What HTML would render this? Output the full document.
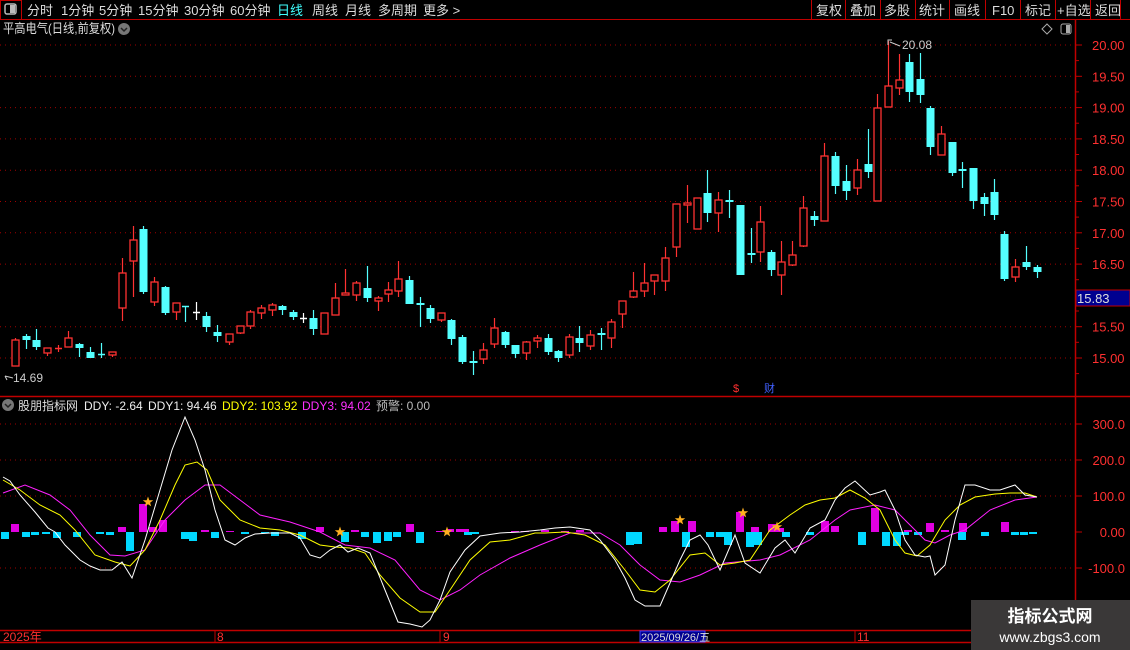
<!DOCTYPE html>
<html><head><meta charset="utf-8">
<style>
html,body{margin:0;padding:0;background:#000;width:1130px;height:650px;overflow:hidden;font-family:"Liberation Sans","Noto Sans CJK SC",sans-serif;}
svg{position:absolute;left:0;top:0}
text{font-family:"Liberation Sans","Noto Sans CJK SC",sans-serif}
</style></head><body>
<svg id="s" width="1130" height="650" xmlns="http://www.w3.org/2000/svg">
<rect width="1130" height="650" fill="#000"/>
<line x1="0" y1="19.5" x2="1130" y2="19.5" stroke="#c00000"/>
<rect x="0.5" y="0.5" width="21" height="19" fill="none" stroke="#c00000"/>
<rect x="5" y="4" width="11" height="10" rx="2" fill="none" stroke="#bbb" stroke-width="1.5"/>
<rect x="10" y="5" width="5" height="8" fill="#bbb"/>
<g font-size="13" fill="#ddd">
<text x="27" y="15">分时</text><text x="61" y="15">1分钟</text><text x="99" y="15">5分钟</text>
<text x="138" y="15">15分钟</text><text x="184" y="15">30分钟</text><text x="230" y="15">60分钟</text>
<text x="277" y="15" fill="#40ffff">日线</text><text x="312" y="15">周线</text><text x="345" y="15">月线</text>
<text x="378" y="15">多周期</text><text x="423" y="15">更多 &gt;</text>
<text x="816" y="15">复权</text><text x="850" y="15">叠加</text><text x="884" y="15">多股</text>
<text x="919" y="15">统计</text><text x="954" y="15">画线</text><text x="992" y="15">F10</text>
<text x="1025" y="15">标记</text><text x="1057" y="15">+自选</text><text x="1095" y="15">返回</text>
</g>
<g stroke="#c00000">
<line x1="811.5" y1="0" x2="811.5" y2="19"/><line x1="845.5" y1="0" x2="845.5" y2="19"/>
<line x1="880.5" y1="0" x2="880.5" y2="19"/><line x1="915.5" y1="0" x2="915.5" y2="19"/>
<line x1="949.5" y1="0" x2="949.5" y2="19"/><line x1="985.5" y1="0" x2="985.5" y2="19"/>
<line x1="1020.5" y1="0" x2="1020.5" y2="19"/><line x1="1055.5" y1="0" x2="1055.5" y2="19"/>
<line x1="1090.5" y1="0" x2="1090.5" y2="19"/><line x1="1120.5" y1="0" x2="1120.5" y2="19"/>
</g>
<text x="3" y="33" font-size="13" fill="#ddd" textLength="112" lengthAdjust="spacingAndGlyphs">平高电气(日线,前复权)</text>
<circle cx="124" cy="29" r="6" fill="#777"/><path d="M121 28 L124 31 L127 28" stroke="#222" stroke-width="1.5" fill="none"/>
<path d="M1042 29 L1047 24 L1052 29 L1047 34 Z" fill="none" stroke="#aaa"/>
<rect x="1061" y="24" width="10" height="10" rx="2" fill="none" stroke="#aaa"/><rect x="1066" y="25" width="4" height="8" fill="#aaa"/>
<line x1="1075.5" y1="20" x2="1075.5" y2="630" stroke="#c00000" stroke-width="1.5"/>
<line x1="0" y1="396.5" x2="1130" y2="396.5" stroke="#c00000" stroke-width="1.5"/>
<g id="grid"></g>
<g id="cand"></g>
<g id="ind"></g>
<text x="902" y="49" font-size="12" fill="#ccc">20.08</text>
<path d="M888 45 L888 40 L892 40 M890 42 L900 46" stroke="#ccc" fill="none"/>
<text x="13" y="382" font-size="12" fill="#ccc">14.69</text>
<path d="M5 376 L13 378 M5 376 L7 380" stroke="#ccc" fill="none"/>
<rect x="1076" y="290" width="54" height="16" fill="#000090" stroke="#c00000"/>
<text x="1077" y="303" font-size="13" fill="#ddd">15.83</text>
<text x="733" y="392" font-size="11" fill="#ff3030">$</text>
<text x="764" y="392" font-size="11" fill="#4060ff">财</text>
<circle cx="8" cy="405" r="6" fill="#777"/><path d="M5 404 L8 407 L11 404" stroke="#222" stroke-width="1.5" fill="none"/>
<g font-size="12">
<text x="18" y="410" fill="#ddd">股朋指标网</text>
<text x="84" y="410" fill="#eee">DDY: -2.64</text>
<text x="148" y="410" fill="#eee">DDY1: 94.46</text>
<text x="222" y="410" fill="#ffff00">DDY2: 103.92</text>
<text x="302" y="410" fill="#ff30ff">DDY3: 94.02</text>
<text x="376" y="410" fill="#bbb">预警: 0.00</text>
</g>
<line x1="0" y1="630.5" x2="1130" y2="630.5" stroke="#c00000" stroke-width="1.5"/>
<line x1="0" y1="642.5" x2="1130" y2="642.5" stroke="#c00000" stroke-width="1.5"/>
<g stroke="#c00000"><line x1="215" y1="630" x2="215" y2="642"/><line x1="440" y1="630" x2="440" y2="642"/><line x1="855" y1="630" x2="855" y2="642"/></g>
<g font-size="12" fill="#ff3030">
<text x="3" y="641">2025年</text><text x="217" y="641">8</text><text x="443" y="641">9</text><text x="857" y="641">11</text>
</g>
<rect x="640" y="631" width="65" height="11" fill="#000090" stroke="#4040ff"/>
<text x="641" y="641" font-size="11" fill="#ddd">2025/09/26/五</text>
<rect x="971" y="600" width="159" height="50" fill="#3a3838"/>
<text x="1050" y="622" font-size="17" font-weight="bold" fill="#fff" text-anchor="middle">指标公式网</text>
<text x="1050" y="642" font-size="14" fill="#fff" text-anchor="middle">www.zbgs3.com</text>
</svg>
<script>
var NS="http://www.w3.org/2000/svg";
function add(g,tag,a){var e=document.createElementNS(NS,tag);for(var k in a)e.setAttribute(k,a[k]);document.getElementById(g).appendChild(e);return e;}
var labs=["20.00","19.50","19.00","18.50","18.00","17.50","17.00","16.50","16.00","15.50","15.00"];
for(var i=0;i<11;i++){var y=45+i*31.3;
 if(i!=8){add("grid","line",{x1:0,y1:y,x2:1075,y2:y,stroke:"#a00000","stroke-dasharray":"1,4"});
 add("grid","text",{x:1092,y:y+5,"font-size":13,fill:"#ff3030"}).textContent=labs[i];}
 add("grid","line",{x1:1075,y1:y,x2:1082,y2:y,stroke:"#c00000"});
 add("grid","line",{x1:1075,y1:y+15.6,x2:1079,y2:y+15.6,stroke:"#c00000"});
}
[424,460,496,568].forEach(function(y){add("grid","line",{x1:0,y1:y,x2:1075,y2:y,stroke:"#a00000","stroke-dasharray":"1,4"});});
[[424,"300.0"],[460,"200.0"],[496,"100.0"],[532,"0.00"],[568,"-100.0"]].forEach(function(a){
 add("grid","line",{x1:1075,y1:a[0],x2:1082,y2:a[0],stroke:"#c00000"});
 add("grid","text",{x:1125,y:a[0]+5,"font-size":13,fill:"#ff3030","text-anchor":"end"}).textContent=a[1];});
var C=[[15,338,340,366,366,'r'],[26,334,336,340,349,'c'],[36,329,340,347,350,'c'],[47,348,348,353,356,'r'],[58,345,348,349,352,'r'],[68,331,338,347,347,'r'],[79,343,344,348,357,'c'],[90,347,352,358,358,'c'],[101,343,354,355,358,'c'],[112,352,352,355,357,'r'],
[122,258,273,308,321,'r'],[133,226,240,261,297,'r'],[143,226,229,292,294,'c'],[154,277,282,302,306,'r'],[165,286,287,313,315,'c'],[176,303,303,312,320,'r'],[185,306,306,307,322,'c'],[196,302,312,313,320,'w'],[206,312,316,327,332,'c'],[217,325,332,336,342,'c'],
[229,334,334,342,345,'r'],[240,326,326,333,334,'r'],[250,310,312,326,329,'r'],[261,305,308,313,319,'r'],[272,303,305,310,316,'r'],[282,305,306,310,315,'c'],[293,310,312,317,320,'c'],[303,313,318,319,323,'w'],[313,310,318,329,335,'c'],[324,313,313,334,334,'r'],
[335,283,298,315,315,'r'],[345,269,293,295,295,'r'],[356,281,283,295,301,'r'],[367,266,288,298,302,'c'],[378,296,298,301,311,'r'],[388,282,290,294,302,'r'],[398,261,279,291,297,'r'],[409,276,280,304,304,'c'],[420,297,303,305,327,'c'],[430,305,308,319,323,'c'],
[441,313,313,320,322,'r'],[451,319,320,339,345,'c'],[462,335,337,362,364,'c'],[473,351,361,363,375,'c'],[483,343,350,359,364,'r'],[494,318,328,344,348,'r'],[505,331,332,345,348,'c'],[515,345,345,354,358,'c'],[526,341,342,353,360,'r'],[537,335,338,341,348,'r'],
[548,334,338,352,355,'c'],[558,350,351,358,362,'c'],[569,334,337,355,358,'r'],[579,326,338,343,352,'c'],[590,330,335,346,350,'r'],[601,328,333,335,350,'c'],[611,319,322,338,348,'r'],[622,301,301,314,328,'r'],[633,272,291,297,298,'r'],[644,263,283,291,297,'r'],
[654,275,275,281,295,'r'],[665,247,258,281,291,'r'],[676,204,204,247,257,'r'],[687,185,203,205,223,'r'],[697,198,198,229,229,'r'],[707,170,193,213,222,'c'],[718,192,200,213,232,'r'],[729,190,200,202,218,'c'],[740,205,205,275,275,'c'],[751,228,253,255,263,'c'],
[760,206,222,252,262,'r'],[771,250,252,270,276,'c'],[781,241,262,275,295,'r'],[792,241,255,265,266,'r'],[803,196,208,246,247,'r'],[814,211,216,220,226,'c'],[824,143,156,221,221,'r'],[835,152,156,186,194,'c'],[846,165,181,191,200,'c'],[857,159,170,188,195,'r'],
[868,129,164,172,178,'c'],[877,94,108,201,201,'r'],[888,41,86,107,107,'r'],[899,54,80,88,95,'r'],[909,54,62,92,102,'c'],[920,53,79,95,103,'c'],[930,106,108,147,155,'c'],[941,126,134,155,155,'r'],[952,142,142,173,176,'c'],[962,162,169,171,188,'c'],
[973,168,168,201,209,'c'],[984,193,197,204,216,'c'],[994,179,192,215,220,'c'],[1004,231,234,279,281,'c'],[1015,259,267,277,282,'r'],[1026,246,262,267,270,'c'],[1037,265,267,272,278,'c']];
C.forEach(function(d){var col=d[5]=='r'?'#ff3232':d[5]=='c'?'#54ffff':'#ffffff';
 add("cand","line",{x1:d[0]+.5,y1:d[1],x2:d[0]+.5,y2:d[4],stroke:col,"stroke-width":1.2});
 var h=d[3]-d[2];
 if(h<2){add("cand","line",{x1:d[0]-3,y1:d[2]+.5,x2:d[0]+4,y2:d[2]+.5,stroke:col,"stroke-width":1.5});}
 else if(d[5]=='r'){add("cand","rect",{x:d[0]-3,y:d[2],width:7,height:h,fill:"#000",stroke:col,"stroke-width":1.3});}
 else add("cand","rect",{x:d[0]-3.5,y:d[2],width:8,height:h,fill:col});
});
var Z=532;
var M=[[15,524],[122,527],[143,504],[153,527],[163,520],[205,530],[230,531],[320,527],[355,530],[410,524],[440,531],[450,529],[460,529],[465,529],[515,531],[525,531],[545,530],[565,531],[580,530],[663,527],[675,521],[692,521],[740,512],[755,527],[772,524],[780,528],[825,521],[835,526],[875,508],[908,530],[930,523],[945,530],[963,523],[1005,522]];
M.forEach(function(b){add("ind","rect",{x:b[0]-4,y:b[1],width:8,height:Z-b[1],fill:"#e000e0"});});
var Cy=[[5,539],[26,537],[35,535],[46,534],[57,538],[77,537],[100,534],[110,535],[130,551],[185,539],[193,541],[215,538],[245,534],[265,533],[275,536],[302,539],[345,542],[365,537],[377,543],[388,541],[397,537],[420,543],[468,535],[475,534],[630,545],[638,544],[686,547],[710,537],[720,537],[728,545],[750,547],[758,545],[786,537],[810,535],[862,545],[886,546],[897,546],[905,535],[918,535],[962,540],[985,536],[1015,535],[1024,535],[1033,534]];
Cy.forEach(function(b){add("ind","rect",{x:b[0]-4,y:Z,width:8,height:b[1]-Z,fill:"#00d8ff"});});
function pl(pts,col){add("ind","polyline",{points:pts.map(function(p){return p.join(",")}).join(" "),fill:"none",stroke:col,"stroke-width":1});}
pl([[3,493],[25,485],[50,495],[70,510],[90,535],[110,555],[125,556],[145,550],[165,520],[185,500],[205,485],[220,485],[240,500],[260,515],[290,522],[320,532],[345,545],[370,548],[395,560],[420,590],[440,600],[460,590],[480,575],[510,558],[540,545],[570,533],[600,533],[620,545],[640,565],[660,580],[680,582],[700,575],[725,563],[760,560],[780,555],[810,540],[835,520],[850,510],[875,505],[895,510],[910,525],[925,540],[935,543],[950,535],[965,530],[990,510],[1015,500],[1037,497]],"#ff20ff");
pl([[3,480],[20,490],[40,505],[60,515],[75,530],[95,555],[115,562],[130,566],[145,550],[160,520],[175,485],[185,465],[197,462],[207,470],[220,500],[240,520],[260,528],[280,530],[300,535],[320,545],[335,547],[350,548],[365,553],[380,575],[400,598],[420,612],[435,612],[450,590],[470,560],[490,542],[510,540],[535,533],[545,533],[565,532],[585,535],[605,545],[625,570],[640,590],[655,592],[670,580],[690,555],[705,553],[720,565],[735,563],[750,560],[770,530],[790,515],[805,505],[820,500],[835,498],[850,490],[865,498],[880,510],[895,540],[905,553],[917,556],[930,545],[945,520],[960,505],[975,497],[995,494],[1010,493],[1025,493],[1037,497]],"#ffff00");
pl([[3,477],[10,481],[20,495],[35,512],[48,528],[55,532],[65,545],[80,560],[90,566],[100,570],[112,570],[122,562],[132,578],[145,540],[160,490],[172,450],[185,417],[195,440],[205,470],[215,510],[225,540],[235,545],[245,538],[255,534],[270,533],[290,533],[300,538],[310,555],[320,558],[330,550],[340,545],[348,552],[358,548],[370,553],[385,590],[398,622],[410,624],[422,627],[430,620],[440,600],[450,572],[465,550],[480,536],[500,533],[520,532],[540,530],[555,528],[570,527],[590,530],[600,540],[615,560],[625,578],[635,600],[645,606],[660,606],[670,583],[680,560],[690,540],[700,535],[708,545],[720,570],[735,535],[745,563],[760,573],[775,548],[785,540],[795,553],[810,528],[825,520],[835,500],[845,488],[855,481],[870,495],[880,492],[885,490],[895,510],[905,540],[915,555],[925,557],[930,556],[935,575],[945,565],[955,520],[965,485],[975,485],[990,490],[1000,490],[1015,485],[1025,495],[1037,497]],"#ffffff");
function star(cx,cy){var p=[];for(var i=0;i<10;i++){var r=i%2?2.2:5.5,a=-Math.PI/2+i*Math.PI/5;p.push((cx+r*Math.cos(a)).toFixed(1)+","+(cy+r*Math.sin(a)).toFixed(1));}
 add("ind","polygon",{points:p.join(" "),fill:"#ffb020"});}
[[148,502],[340,532],[447,532],[680,520],[743,513],[777,527]].forEach(function(s){star(s[0],s[1]);});
</script>
</body></html>
